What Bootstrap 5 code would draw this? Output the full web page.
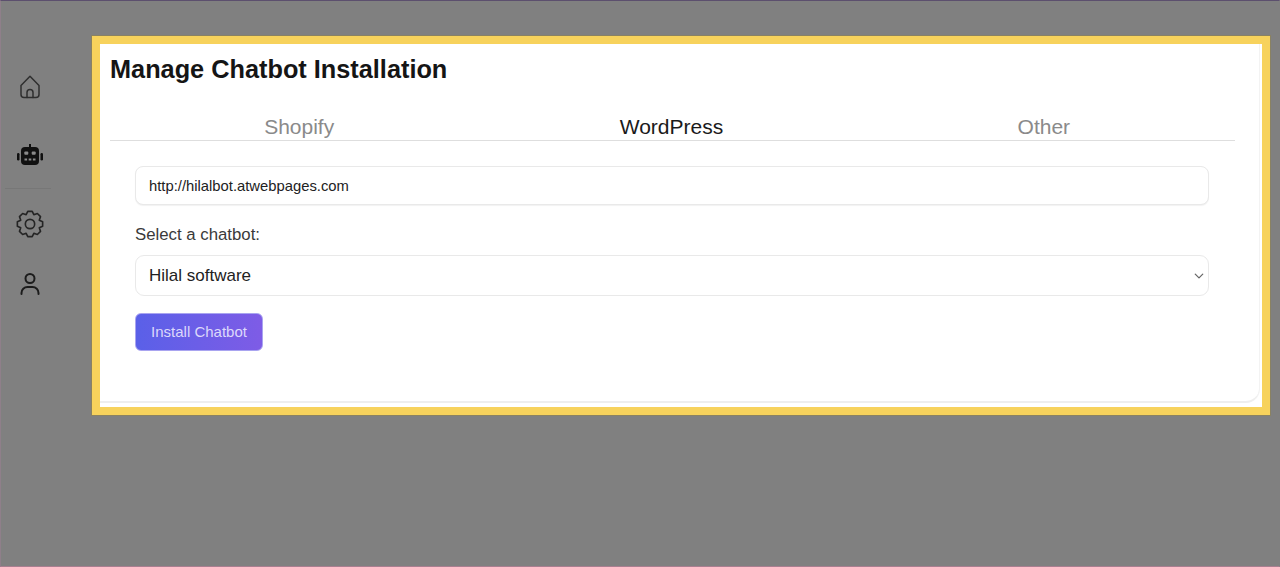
<!DOCTYPE html>
<html lang="en">
<head>
<meta charset="utf-8">
<title>Manage Chatbot Installation</title>
<link href="https://cdn.jsdelivr.net/npm/bootstrap@5.3.0/dist/css/bootstrap.min.css" rel="stylesheet">
<style>
html,body{height:100%;}
body{background:#808080;font-family:"Liberation Sans",Arial,sans-serif;color:#111;overflow:hidden;}
.stage{height:567px;border:1px solid #8f7f8a;border-top-color:#5c4f6e;border-bottom-color:#a87f90;border-right-color:#808080;}
.rail{width:91px;flex:none;padding-top:74px;}
.rail-col{width:58px;}
.rail-item{height:24px;display:flex;justify-content:center;color:#2f2f2f;}
.rail-item svg{display:block;flex:none;}
.rail-gap-bot{margin-top:45px;}
.rail-gap-gear{margin-top:21px;}
.rail-gap-user{margin-top:38px;}
.rail-rule{width:46px;margin-left:4px;margin-top:20px;border-top:1px solid #777;}
.hilite{width:1178px;height:379px;margin-top:35px;border:8px solid #f7d25c;background:#fff;box-shadow:0 0 0 1px #8a8262;}
.inner-panel{height:359px;margin-right:3px;border:0;border-bottom:2px solid #eeeeee;border-radius:0 0 14px 0;box-shadow:1px 0 0 #f3f3f3;padding:8px 10px 0;}
.page-title{font-size:25.3px;font-weight:700;line-height:34px;margin:0;color:#151515;}
.tab-strip{width:1125px;margin-top:26px;height:29px;padding:2px 5px 0 3px;border-bottom:1px solid #dedede;}
.tab-cell{flex:1 1 0;text-align:center;font-size:21px;line-height:26px;color:#8a8a8a;}
.tab-cell.on{color:#1a1a1a;}
.install-form{width:1074px;margin-left:25px;margin-top:25px;}
.url-field.form-control{height:39px;font-size:14.8px;padding:0 13px;border:1px solid #e9e9e9;border-radius:8px;color:#222;box-shadow:0 1px 1px #f2f2f2;}
.pick-label{font-size:16.8px;line-height:20px;margin:20px 0 10px;color:#3a3a3a;display:block;}
.pick-field.form-select{height:41px;font-size:17px;padding:1px 13px 0;border:1px solid #e9e9e9;border-radius:9px;color:#222;background-image:url("data:image/svg+xml,%3csvg xmlns='http://www.w3.org/2000/svg' viewBox='0 0 16 16'%3e%3cpath fill='none' stroke='%23666' stroke-linecap='round' stroke-linejoin='round' stroke-width='2' d='m2 5 6 6 6-6'/%3e%3c/svg%3e");background-position:right 3px center;background-size:12px 10px;}
.install-btn.btn{display:block;width:128px;height:38px;margin-top:17px;padding:0;font-size:15px;border:1px solid #a9a4f0;border-radius:6px;color:#dcd8fb;background:linear-gradient(90deg,#5a60e8,#7e5ce6);}
</style>
</head>
<body class="m-0">
<div class="stage d-flex">
  <aside class="rail">
    <div class="rail-col d-flex flex-column">
      <div class="rail-item">
        <svg width="24" height="24" viewBox="0 0 24 24" fill="none" stroke="currentColor" stroke-width="1.500" stroke-linejoin="round" stroke-linecap="round"><path d="M3 10.500 12 1.200l9 9.300v9a3 3 0 0 1-3 3H6a3 3 0 0 1-3-3z"/><path d="M9 22.500v-5a3 3 0 0 1 6 0v5"/></svg>
      </div>
      <div class="rail-item rail-gap-bot">
        <svg width="28" height="22" viewBox="0 0 28 22"><g fill="#111"><rect x="13" y="0" width="2" height="4"/><rect x="5" y="3" width="18" height="18" rx="4"/><rect x="1" y="9" width="2.500" height="7.500" rx="1.200"/><rect x="24.500" y="9" width="2.500" height="7.500" rx="1.200"/></g><g fill="#8a8a8a"><rect x="8.300" y="7.500" width="4" height="3.200" rx="1"/><rect x="15.700" y="7.500" width="4" height="3.200" rx="1"/><rect x="8.500" y="14.500" width="2.600" height="2"/><rect x="12.700" y="14.500" width="2.600" height="2"/><rect x="16.900" y="14.500" width="2.600" height="2"/></g></svg>
      </div>
      <div class="rail-rule"></div>
      <div class="rail-item rail-gap-gear">
        <svg width="28" height="28" viewBox="0 0 24 24" fill="none" stroke="#252525" stroke-width="1.400" stroke-linejoin="round"><path d="M10.090 1.170H13.910L15.290 4.050 18.310 2.990 21.010 5.690 19.950 8.710 22.830 10.090V13.910L19.950 15.290 21.010 18.310 18.310 21.010 15.290 19.950 13.910 22.830H10.090L8.710 19.950 5.690 21.010 2.990 18.310 4.050 15.290 1.170 13.910V10.090L4.050 8.710 2.990 5.690 5.690 2.990 8.710 4.050z"/><circle cx="12" cy="12" r="4"/></svg>
      </div>
      <div class="rail-item rail-gap-user">
        <svg width="24" height="24" viewBox="0 0 24 24" fill="none" stroke="#1c1c1c" stroke-width="2" stroke-linecap="round"><circle cx="12" cy="6.500" r="4.500"/><path d="M3.500 22v-1a6 6 0 0 1 6-6h5a6 6 0 0 1 6 6v1"/></svg>
      </div>
    </div>
  </aside>
  <main class="hilite">
    <div class="card inner-panel">
      <h1 class="page-title">Manage Chatbot Installation</h1>
      <div class="tab-strip d-flex">
        <div class="tab-cell">Shopify</div>
        <div class="tab-cell on">WordPress</div>
        <div class="tab-cell">Other</div>
      </div>
      <form class="install-form">
        <input class="form-control url-field" type="text" value="http://hilalbot.atwebpages.com" aria-label="Site URL">
        <label class="pick-label" for="bot">Select a chatbot:</label>
        <select class="form-select pick-field" id="bot"><option>Hilal software</option></select>
        <button class="btn install-btn" type="button">Install Chatbot</button>
      </form>
    </div>
  </main>
</div>
<script src="https://cdn.jsdelivr.net/npm/bootstrap@5.3.0/dist/js/bootstrap.bundle.min.js"></script>
</body>
</html>
